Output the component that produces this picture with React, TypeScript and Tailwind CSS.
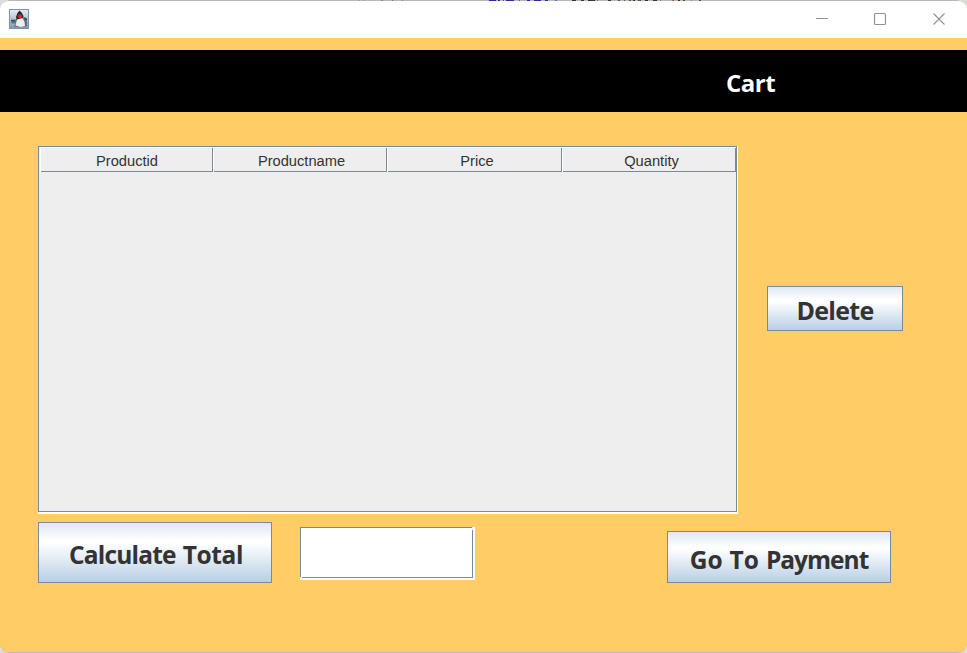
import type { ReactNode } from 'react';

const columns = [
  { name: 'Productid', width: 'w-[173px]', inset: 'pl-px' },
  { name: 'Productname', width: 'w-[174px]', inset: 'pl-[3px]' },
  { name: 'Price', width: 'w-[175px]', inset: 'pl-[5px]' },
  { name: 'Quantity', width: 'w-[174px]', inset: 'pl-[5px]' },
];

// Slivers of the window behind, visible along the top edge.
const slivers = [
  { x: 9, w: 1, c: '#999999' }, { x: 14, w: 1, c: '#999999' },
  { x: 31, w: 2, c: '#72889c' }, { x: 42, w: 1, c: '#777777' }, { x: 52, w: 1, c: '#72889c' },
  { x: 139, w: 7, c: '#302b9b' }, { x: 148, w: 2, c: '#302b9b' }, { x: 153, w: 1, c: '#4545a5' },
  { x: 156, w: 8, c: '#302b9b' }, { x: 169, w: 1, c: '#66559c' }, { x: 177, w: 3, c: '#302b9b' },
  { x: 184, w: 7, c: '#302b9b' }, { x: 195, w: 3, c: '#302b9b' }, { x: 205, w: 2, c: '#527bb5' },
  { x: 222, w: 4, c: '#333333' }, { x: 231, w: 3, c: '#333333' }, { x: 238, w: 7, c: '#333333' },
  { x: 247, w: 1, c: '#9b6844' }, { x: 258, w: 3, c: '#333333' }, { x: 268, w: 2, c: '#63513c' },
  { x: 274, w: 1, c: '#63513c' }, { x: 279, w: 2, c: '#63513c' }, { x: 283, w: 2, c: '#333333' },
  { x: 288, w: 3, c: '#63513c' }, { x: 295, w: 3, c: '#333333' }, { x: 303, w: 4, c: '#333333' },
  { x: 310, w: 1, c: '#72889c' }, { x: 322, w: 2, c: '#95724b' }, { x: 328, w: 2, c: '#333333' },
  { x: 333, w: 2, c: '#63513c' }, { x: 341, w: 1, c: '#72889c' }, { x: 349, w: 2, c: '#63513c' },
];

function JavaIcon() {
  return (
    <svg width="20" height="20" viewBox="0 0 20 20">
      <defs>
        <linearGradient id="tile" x1="0" y1="0" x2="0" y2="1">
          <stop offset="0" stopColor="#e5edf5" />
          <stop offset="0.5" stopColor="#b5c6d8" />
          <stop offset="1" stopColor="#8194ab" />
        </linearGradient>
      </defs>
      <rect x="0.5" y="0.5" width="19" height="19" fill="url(#tile)" stroke="#8192a8" />
      <path d="M1.5 13 5 11.5 8 9.5 14 8.5 16 8 18 10 18 17 14 18 5 17.5 6.5 14.5 3 14.5Z" fill="#5b6570" opacity="0.85" />
      <path d="M10.5 1.5 8.5 4 7 8 8 12 13.5 11 14.5 7 12.5 3.5Z" fill="#252a31" />
      <path d="M8 10.5 13.5 9 15.5 13 16 17 12 18 6.5 16.5Z" fill="#eeeeec" />
      <circle cx="11" cy="7.2" r="2" fill="#ed2024" />
      <path d="M2 11.5h4M15.5 9.5l2.5 1" stroke="#35495b" strokeWidth="1.5" />
    </svg>
  );
}

function SwingButton({ className, children }: { className: string; children: ReactNode }) {
  return (
    <button
      className={`flex shrink-0 items-center justify-center whitespace-nowrap border border-[#7a8a99] bg-[linear-gradient(to_bottom,#dde8f3_0%,#ffffff_30%,#ffffff_34%,#b8cfe5_100%)] font-['Open_Sans','Noto_Sans',sans-serif] font-bold text-[#333333] ${className}`}
    >
      {children}
    </button>
  );
}

export default function App() {
  return (
    <div className="h-[653px] w-[967px] overflow-hidden bg-[#dcdcdc]">
      <div className="relative flex h-[653px] flex-col overflow-hidden rounded-[9px] bg-[#ffcc66]">
        <header className="flex h-[38px] shrink-0 items-center justify-between bg-white pl-[9px] pr-[21px]">
          <JavaIcon />
          <svg width="130" height="14" viewBox="0 0 130 14" fill="none" stroke="#929292">
            <path d="M0 6.5h12" />
            <rect x="58.5" y="1.5" width="11" height="11" rx="1" strokeWidth="1.2" />
            <path d="m117.5 1.5 11 11m0-11-11 11" strokeWidth="1.1" />
          </svg>
        </header>
        <div className="mt-3 flex h-[62px] shrink-0 items-center bg-black pl-[726px] pt-[4px] font-['Open_Sans','Noto_Sans',sans-serif] text-[24px] font-bold leading-8 tracking-[-0.5px] text-white">
          Cart
        </div>
        <main className="pl-[38px] pt-[34px]">
          <div className="flex">
            <div className="h-[368px] w-[700px] border-b-2 border-r border-white">
              <div className="h-[366px] border border-[#7a8a99] bg-[#eeeeee] pl-px font-['Liberation_Sans',Arial,sans-serif]">
                <div className="flex h-[25px]">
                  {columns.map((column) => (
                    <div
                      key={column.name}
                      className={`flex shrink-0 border-l border-t border-white ${column.width}`}
                    >
                      <div
                        className={`flex flex-1 items-center justify-center border-b border-r border-[#7a8a99] pt-[3px] text-[14.67px] leading-none text-[#333333] ${column.inset}`}
                      >
                        {column.name}
                      </div>
                    </div>
                  ))}
                </div>
              </div>
            </div>
            <SwingButton className="ml-[29px] mt-[140px] h-[45px] w-[136px] pt-[5px] text-[25px] tracking-[-0.7px]">
              Delete
            </SwingButton>
          </div>
          <div className="mt-2 flex">
            <SwingButton className="h-[61px] w-[234px] gap-[7px] pl-[2px] pt-[6px] text-[24.5px]">
              <span className="tracking-[-0.8px]">Calculate</span>
              <span className="tracking-[-0.4px]">Total</span>
            </SwingButton>
            <div className="relative ml-7 mt-[5px] h-[53px] w-[175px] border-b-2 border-r-2 border-white">
              <input
                aria-label="Total"
                className="block h-[51px] w-[173px] border border-[#7a8a99] bg-white outline-none"
              />
              <span className="absolute right-0 top-0 h-[3px] w-px bg-[#eeeeee]" />
              <span className="absolute bottom-0 left-0 h-px w-[2px] bg-[#eeeeee]" />
            </div>
            <SwingButton className="ml-[192px] mt-[9px] h-[52px] w-[224px] gap-[7px] pt-[6px] text-[24.5px]">
              <span>Go</span>
              <span>To</span>
              <span className="tracking-[-1px]">Payment</span>
            </SwingButton>
          </div>
        </main>
        <div className="pointer-events-none absolute inset-0 rounded-[9px] border-y border-[#b9b9b9]" />
        <svg className="absolute left-[350px] top-0" width="360" height="1" shapeRendering="crispEdges">
          {slivers.map((s) => (
            <rect key={s.x} x={s.x} width={s.w} height="1" fill={s.c} />
          ))}
        </svg>
      </div>
    </div>
  );
}
